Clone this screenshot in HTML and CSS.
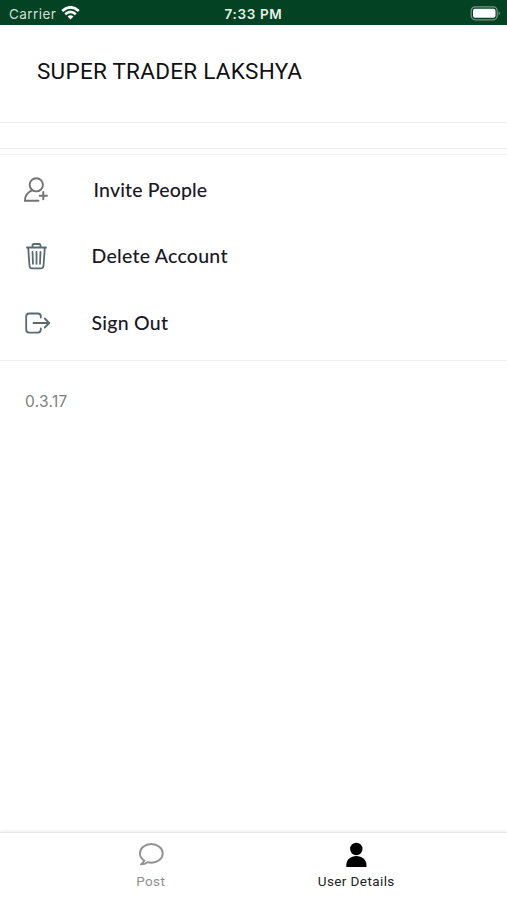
FILE: index.html
```html
<!DOCTYPE html>
<html lang="en">
<head>
<meta charset="utf-8">
<title>User Details</title>
<link rel="stylesheet" href="styles.css">
</head>
<body>
<header class="status">
  <div class="carrier"><span>Carrier</span>
    <svg class="wifi" width="19" height="14" viewBox="0 0 19 14"><g fill="none" stroke="#fff" stroke-width="2.7"><path d="M1.2 5.1Q9.500-2.500 17.800 5.100"/><path d="M4.200 8.200Q9.500 3.400 14.800 8.200"/></g><path d="M6.600 10.500Q9.500 7.900 12.400 10.500L9.500 13.500Z" fill="#fff"/></svg>
  </div>
  <time class="clock">7:33 PM</time>
  <svg class="battery" width="31" height="15" viewBox="0 0 31 15"><rect x="1.200" y=".8" width="26" height="13" rx="4" fill="none" stroke="#799583" stroke-width="1.200"/><rect x="3" y="2.800" width="22.500" height="9" rx="2" fill="#fff"/><path d="M28.600 5.200Q31.200 7.300 28.600 9.400Z" fill="#799583"/></svg>
</header>
<h1 class="name">SUPER TRADER LAKSHYA</h1>
<div class="strip"></div>
<nav class="menu">
  <a class="row invite"><svg width="28" height="28" viewBox="0 0 28 28" fill="none" stroke="#737373" stroke-width="1.900" stroke-linecap="round"><circle cx="14.300" cy="8.800" r="6.600"/><path d="M10.300 14.200Q3 17.500 2.900 24.800H16.500"/><path d="M21.300 16.100V23.300M17.700 19.700H24.900" stroke-width="2"/></svg><span>Invite People</span></a>
  <a class="row delete"><svg width="28" height="28" viewBox="0 0 28 28" fill="none" stroke="#586a73" stroke-width="1.800" stroke-linecap="round" stroke-linejoin="round"><path d="M5 5.500H24M10.500 5V3.700Q10.500 2 12 2H17Q18.500 2 18.500 3.700V5M6.200 5.800L7.500 23.700Q7.700 26.400 10.300 26.400H18.700Q21.300 26.400 21.500 23.700L22.800 5.800M10.500 10L11 21.800M14.500 10V21.800M18.500 10L18 21.800"/></svg><span>Delete Account</span></a>
  <a class="row signout"><svg width="28" height="28" viewBox="0 0 28 28" fill="none" stroke="#586a73" stroke-width="1.800" stroke-linecap="round" stroke-linejoin="round"><path d="M18.800 8.600V7.500Q18.800 4.500 15.800 4.500H7.200Q4.200 4.500 4.200 7.500V20.600Q4.200 23.600 7.200 23.600H15.800Q18.800 23.600 18.800 20.600V19.300M11.500 14H27M22.800 9.500L27.200 14L22.800 18.500"/></svg><span>Sign Out</span></a>
</nav>
<main class="content"><span class="version">0.3.17</span></main>
<footer class="tabs">
  <a class="tab post"><svg width="28" height="26" viewBox="0 0 28 26"><path d="M8.200 20.200C5 18.500 2.900 15.600 2.900 12.500C2.900 7.200 8 3 14.300 3S25.700 7.200 25.700 12.400S20.600 21.700 14.300 21.700Q12.300 21.700 10.500 21.200Q7.500 23.600 4 23.400Q6.800 21.800 6.900 19.300" fill="none" stroke="#929292" stroke-width="1.900" stroke-linejoin="round"/></svg><span>Post</span></a>
  <a class="tab active"><svg width="28" height="26" viewBox="0 0 28 26"><circle cx="14.300" cy="8" r="6.200"/><path d="M4.300 26V24.500C4.300 18.500 8.800 15 14.300 15S24.500 18.500 24.500 24.500V26Z"/></svg><span>User Details</span></a>
</footer>
</body>
</html>
```
FILE: styles.css
```css
* { box-sizing: border-box; }
body {
  margin: 0;
  height: 900px;
  display: flex;
  flex-direction: column;
  background: #fff;
  color: #191825;
  font-family: Lato, sans-serif;
  overflow: hidden;
}
svg { display: block; flex: none; }
.status {
  height: 25px;
  flex: none;
  display: grid;
  grid-template-columns: 1fr auto 1fr;
  align-items: center;
  padding: 2px 6px 0 9px;
  background: #034222;
  color: #fff;
  font-family: Inter, sans-serif;
  font-size: 13.5px;
}
.carrier { display: flex; align-items: center; gap: 5px; color: #d3dfd7; letter-spacing: .45px; }
.wifi { margin-top: -1px; }
.clock { font-weight: 600; font-size: 13.500px; letter-spacing: .65px; margin-right: 3px; color: #e9f0eb; }
.battery { justify-self: end; }
.name {
  margin: 0;
  height: 98px;
  flex: none;
  padding: 30px 37px 0;
  border-bottom: 1px solid #f0f0f0;
  color: #111;
  font-family: Roboto, sans-serif;
  font-size: 22.500px;
  letter-spacing: .25px;
  line-height: 32px;
  font-weight: 400;
  white-space: nowrap;
}
.strip { height: 26px; flex: none; border-bottom: 1px solid #f0f0f0; }
.menu {
  flex: none;
  height: 207px;
  margin-top: 5px;
  padding-top: 1px;
  border-top: 1px solid #f3f3f3;
  border-bottom: 1px solid #f0f0f0;
}
.row {
  height: 66.500px;
  display: flex;
  align-items: center;
  padding-left: 22px;
  gap: 41.500px;
  font-size: 19.500px;
  letter-spacing: .25px;
  font-weight: 500;
  white-space: nowrap;
}
.row svg { margin-top: 1px; }
.invite { gap: 43.500px; letter-spacing: .15px; }
.content { flex: 1; padding: 30px 25px; }
.version { color: #808080; font-family: Inter, sans-serif; font-size: 15.500px; letter-spacing: .3px; line-height: 20px; }
.tabs {
  height: 68px;
  flex: none;
  display: flex;
  padding: 8px 48px 0;
  border-top: 1px solid #e7e7e7;
  box-shadow: 0 -1px 3px rgba(0, 0, 0, .07);
}
.tab {
  flex: 1;
  display: flex;
  flex-direction: column;
  align-items: center;
  gap: 5px;
  color: #8e8e8e;
  font-family: Roboto, sans-serif;
  font-size: 13.500px;
  letter-spacing: .4px;
  line-height: 18px;
}
.active { color: #222; }
```
